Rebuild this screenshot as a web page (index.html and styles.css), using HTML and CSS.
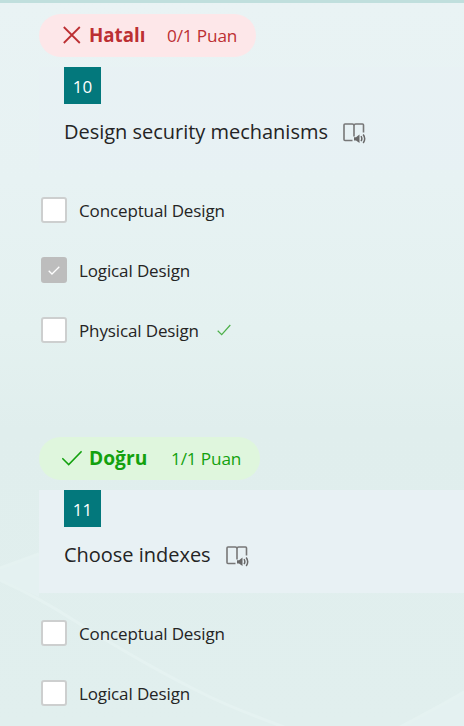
FILE: index.html
```html
<!DOCTYPE html>
<html lang="tr">
<head>
<meta charset="utf-8">
<title>Quiz</title>
<link rel="stylesheet" href="styles.css">
</head>
<body>
<svg class="backdrop" viewBox="0 0 464 726" aria-hidden="true">
  <path class="facet" d="M0 568L39 554V597L0 579ZM464 691L400 726H464Z"/>
  <path class="ray" d="M0 568L39 554M0 580Q40 598 75 621Q150 668 210 697Q240 711 284 727M400 727Q435 709 464 692"/>
</svg>
<main class="quiz">
  <section class="question">
    <div class="result wrong">
      <svg class="mark" viewBox="0 0 20 18"><path d="M1.8 1L17.8 17M17.8 1L1.8 17"/></svg>
      <strong class="verdict">Hatalı</strong>
      <span class="points">0/1 Puan</span>
    </div>
    <header class="prompt">
      <div class="number">10</div>
      <div class="title-row">
        <h2 class="title title-long">Design security mechanisms</h2>
        <svg class="reader" viewBox="0 0 24 22"><path class="book" d="M9.5 17.5H2Q1 17.5 1 16.5V2Q1 1 2 1H9.3Q11 1 11 2.8V13.5M11 2.8Q11 1 12.7 1H19.5Q20.5 1 20.5 2V9.5"/><path class="speaker" d="M11 14.2H13L16.5 11.4V20L13 17.4H11Z"/><path class="wave" d="M18 13.2Q19.7 15.7 18 18.2M20.2 11.5Q23.2 15.7 20.2 20"/></svg>
      </div>
    </header>
    <ul class="options">
      <li class="option"><span class="box"></span><span class="label conceptual">Conceptual Design</span></li>
      <li class="option"><span class="box checked"><svg viewBox="0 0 12 9"><path d="M.7 4.7L4 8L11.3 .8"/></svg></span><span class="label logical">Logical Design</span></li>
      <li class="option"><span class="box"></span><span class="label physical">Physical Design</span><svg class="correct" viewBox="0 0 14 12"><path d="M.7 6.8L4.7 10.7L13.3 1"/></svg></li>
    </ul>
  </section>
  <section class="question">
    <div class="result right">
      <svg class="mark" viewBox="0 0 20 18"><path d="M.3 9.2L6.7 15.6L19.6 2.3"/></svg>
      <strong class="verdict">Doğru</strong>
      <span class="points">1/1 Puan</span>
    </div>
    <header class="prompt tinted">
      <div class="number">11</div>
      <div class="title-row">
        <h2 class="title title-short">Choose indexes</h2>
        <svg class="reader" viewBox="0 0 24 22"><path class="book" d="M9.5 17.5H2Q1 17.5 1 16.5V2Q1 1 2 1H9.3Q11 1 11 2.8V13.5M11 2.8Q11 1 12.7 1H19.5Q20.5 1 20.5 2V9.5"/><path class="speaker" d="M11 14.2H13L16.5 11.4V20L13 17.4H11Z"/><path class="wave" d="M18 13.2Q19.7 15.7 18 18.2M20.2 11.5Q23.2 15.7 20.2 20"/></svg>
      </div>
    </header>
    <ul class="options">
      <li class="option"><span class="box"></span><span class="label conceptual">Conceptual Design</span></li>
      <li class="option"><span class="box"></span><span class="label logical">Logical Design</span></li>
    </ul>
  </section>
</main>
</body>
</html>
```
FILE: styles.css
```css
* { box-sizing: border-box; }
html, body { height: 100%; }
body {
  margin: 0;
  overflow: hidden;
  font-family: "Open Sans", "Noto Sans", sans-serif;
  color: #242424;
  background: linear-gradient(#e9f3f4 0, #e7f2f3 180px, #e4f1f0 330px, #e0eeed 430px, #e1efee 726px);
}
svg { display: block; fill: none; flex: none; }
.backdrop { position: absolute; inset: 0; width: 464px; height: 726px; }
.facet { fill: #e4f1f1; }
.ray { stroke: #e5f2f1; stroke-width: 3; }
.quiz {
  position: relative;
  height: 726px;
  overflow: hidden;
  border-top: 3px solid #c0dfdd;
  padding: 11px 0 0 39px;
}
.question { height: 423px; }
.result {
  display: flex;
  align-items: center;
  height: 43px;
  border-radius: 22px;
  padding: 0 0 2px 23px;
  white-space: nowrap;
}
.wrong { width: 217px; background: #fde7e9; color: #bc2f32; }
.right { width: 221px; background: #dff6dd; color: #13a10e; }
.mark { width: 20px; height: 18px; stroke: currentColor; stroke-width: 1.8; }
.right .mark { stroke-width: 1.5; }
.verdict { width: 78px; margin-left: 7px; font-size: 18.7px; font-weight: 700; line-height: 24px; }
.right .verdict { width: 82px; font-size: 19.2px; }
.points { padding-top: 2px; font-size: 17.2px; font-weight: 370; line-height: 24px; letter-spacing: -.15px; }
.prompt { height: 103px; margin-top: 10px; padding-left: 25px; background: #e8f1f466; }
.tinted { background: #e8f1f4; }
.number {
  width: 37px;
  height: 37px;
  background: #03787c;
  color: #fff;
  font-size: 17px;
  line-height: 39px;
  text-align: center;
}
.title-row { display: flex; align-items: center; height: 56px; }
.title { margin: 0; font-size: 20px; font-weight: 380; line-height: 28px; letter-spacing: -.02px; white-space: nowrap; }
.title-long { width: 278.5px; }
.title-short { width: 161.5px; }
.reader { width: 24px; height: 22px; margin-top: 4px; }
.book { stroke: #777; stroke-width: 1.6; }
.speaker { fill: #686868; }
.wave { stroke: #686868; stroke-width: 1.5; }
.options { list-style: none; margin: 10px 0 0; padding: 0 0 0 2px; }
.option { display: flex; align-items: center; height: 60px; }
.box {
  display: grid;
  place-items: center;
  width: 26px;
  height: 26px;
  flex: none;
  border: 2px solid #cdcfcf;
  border-radius: 3px;
  background: #fff;
}
.checked { background: #bdbdbd; border-color: #bdbdbd; }
.checked svg { width: 12px; height: 9px; stroke: #fff; stroke-width: 1.3; }
.label { margin-left: 12px; padding-top: 1px; font-size: 17px; font-weight: 370; line-height: 24px; letter-spacing: -.13px; white-space: nowrap; }
.physical { width: 138px; }
.correct { width: 14px; height: 12px; stroke: #4db04a; stroke-width: 1.2; }
```
